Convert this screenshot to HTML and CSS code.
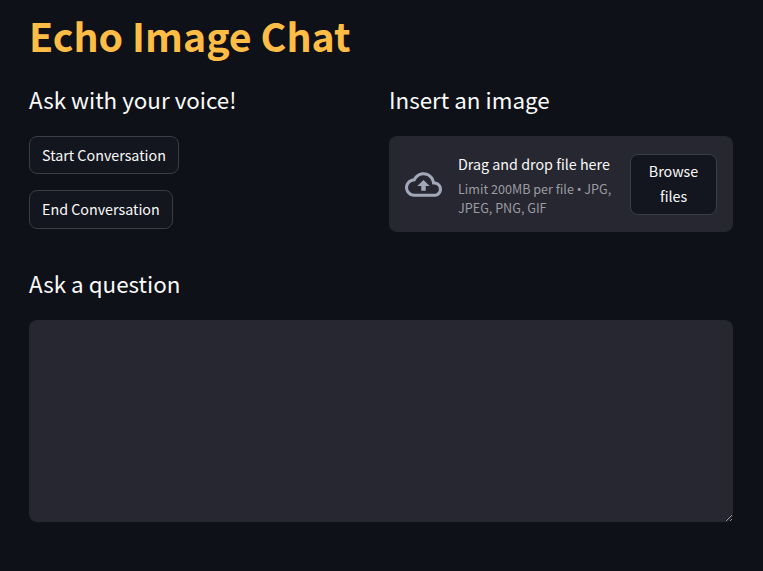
FILE: index.html
```html
<!DOCTYPE html>
<html lang="en">
<head>
  <meta charset="UTF-8">
  <meta name="viewport" content="width=device-width, initial-scale=1.0">
  <title>Echo Image Chat</title>
  <link rel="stylesheet" href="styles.css">
</head>
<body>
  <main class="page">
    <h1>Echo Image Chat</h1>

    <div class="columns">
      <section class="voice">
        <h3>Ask with your voice!</h3>
        <button class="btn start-btn">Start Conversation</button>
        <button class="btn end-btn">End Conversation</button>
      </section>

      <section class="image">
        <h3>Insert an image</h3>
        <div class="dropzone">
          <svg class="cloud" viewBox="0 0 24 24" fill="currentColor" aria-hidden="true">
            <path d="M19.35 10.04C18.67 6.59 15.64 4 12 4 9.11 4 6.6 5.64 5.35 8.04 2.34 8.36 0 10.91 0 14c0 3.31 2.69 6 6 6h13c2.76 0 5-2.24 5-5 0-2.64-2.05-4.78-4.65-4.96zM19 18H6c-2.21 0-4-1.79-4-4 0-2.05 1.53-3.76 3.56-3.97l1.07-.11.5-.95C8.08 7.14 9.94 6 12 6c2.62 0 4.88 1.86 5.39 4.43l.3 1.5 1.53.11c1.56.1 2.78 1.41 2.78 2.96 0 1.65-1.35 3-3 3zM8 13h2.55v3h2.9v-3H16l-4-4z"/>
          </svg>
          <div class="drop-text">
            <div class="drop-title">Drag and drop file here</div>
            <div class="drop-limit">Limit 200MB per file <span class="dot">•</span> JPG,</div>
            <div class="drop-limit">JPEG, PNG, GIF</div>
          </div>
          <button class="btn browse-btn">Browse files</button>
        </div>
      </section>
    </div>

    <section class="question">
      <h3>Ask a question</h3>
      <textarea class="question-input"></textarea>
    </section>
  </main>
</body>
</html>
```

FILE: styles.css
```css
html, body {
  margin: 0;
  height: 100%;
}
body {
  background-color: #0e1117;
  color: #fafafa;
  font-family: "Noto Sans CJK SC", "Noto Sans", sans-serif;
  overflow: hidden;
}
.page {
  padding: 9px 30px 0 29px;
}
h1 {
  margin: 0 0 23px;
  color: #ffbd45;
  font-size: 39.3px;
  font-weight: 700;
  line-height: 52px;
}
h3 {
  margin: 0;
  font-size: 22.4px;
  font-weight: 400;
  line-height: 30px;
}
.columns {
  display: grid;
  grid-template-columns: 344px 344px;
  gap: 16px;
}
.voice {
  display: flex;
  flex-direction: column;
  align-items: flex-start;
}
.voice h3, .image h3 {
  margin-bottom: 22px;
}
.btn {
  background-color: #13161e;
  color: #fafafa;
  border: 1px solid #3a3c46;
  border-radius: 8px;
  font-family: inherit;
  font-size: 14.3px;
  line-height: 25px;
  padding: 0 12px 2px;
}
.start-btn {
  height: 38px;
  margin-bottom: 16px;
}
.end-btn {
  height: 39px;
}
.dropzone {
  display: flex;
  align-items: center;
  background-color: #262730;
  border-radius: 8px;
  padding: 16px;
  height: 96px;
  box-sizing: border-box;
}
.cloud {
  width: 37px;
  height: 37px;
  flex: none;
  color: #a3a8b8;
  margin-right: 16px;
}
.drop-text {
  flex: 1;
  min-width: 0;
  padding-top: 1px;
}
.drop-title {
  font-size: 14.3px;
  line-height: 22px;
  margin-bottom: 5px;
}
.drop-limit {
  color: #9c9ca2;
  font-size: 12.6px;
  line-height: 18px;
  white-space: nowrap;
}
.dot {
  font-family: "Noto Sans", sans-serif;
}
.browse-btn {
  width: 87px;
  height: 61px;
  flex: none;
}
.question {
  margin-top: 36px;
}
.question h3 {
  margin-bottom: 22px;
}
.question-input {
  display: block;
  width: 704px;
  height: 202px;
  box-sizing: border-box;
  background-color: #262730;
  border: none;
  border-radius: 8px;
  color: #fafafa;
  padding: 16px;
  margin: 0;
  outline: none;
}
```
